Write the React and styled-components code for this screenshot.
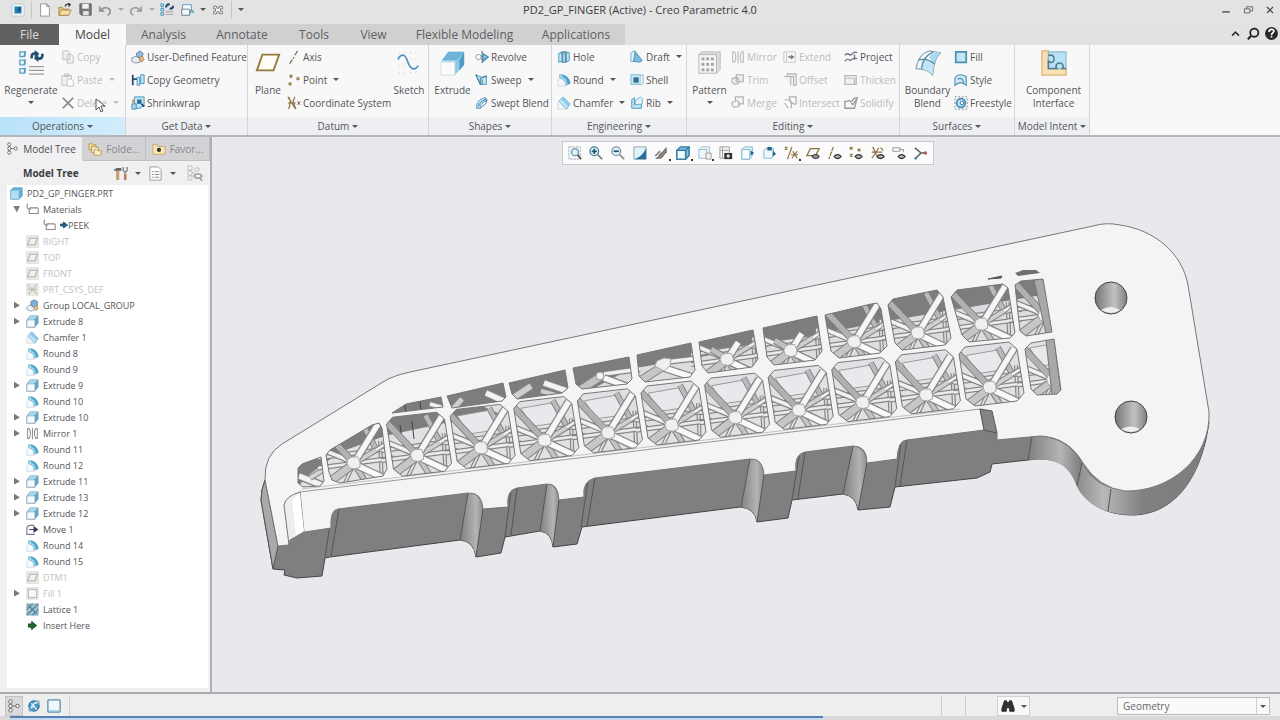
import React from 'react';
import styled, { createGlobalStyle } from 'styled-components';

const BLUE = '#3f8fb8';
const SKY = '#c3e6f6';
const TAN = '#a08a50';
const INK = '#4a4f55';

// Small icons, all on a 16x16 grid
const glyphs = {
  app: (
    <>
      <rect x="1" y="1" width="14" height="14" rx="2" fill="#f3f6f8" stroke="#b9c4cc" />
      <rect x="4" y="4" width="8" height="8" fill="#2a7cae" stroke="#8cc1de" />
      <rect x="8" y="5" width="3" height="5" fill="#175c8a" />
    </>
  ),
  newFile: <path d="M3 1h7l3 3v11H3zM10 1v3h3" fill="#fff" stroke="#8b8b8b" />,
  open: (
    <>
      <path d="M1 14V5h4l1 2h6v7z" fill="#e8c376" stroke="#a98747" />
      <path d="M1 14l3-6h11l-3 6z" fill="#f7dfa4" stroke="#a98747" />
      <path d="M8 4c1-3 3-3 6-2M12 0l2 2-2 2" stroke="#333" strokeWidth="1.4" />
    </>
  ),
  save: (
    <>
      <path d="M1 1h14v14H3l-2-2z" fill="#777" stroke="#5d5d5d" />
      <rect x="4" y="1" width="8" height="6" fill="#f1f1f1" />
      <rect x="5" y="10" width="7" height="5" fill="#e4e4e4" />
    </>
  ),
  undo: <path d="M2 4v5h5M3 9c2-5 11-5 11 1 0 2-1 3-3 4" stroke="#8e8e8e" strokeWidth="1.8" />,
  redo: <path d="M14 4v5H9M13 9C11 4 2 4 2 10c0 2 1 3 3 4" stroke="#9c9c9c" strokeWidth="1.8" />,
  regen: (
    <>
      <path d="M1 1h3v3H1zM1 6h3v3H1zM1 11h3v3H1z" fill={SKY} stroke={BLUE} />
      <path d="M7 5c0-3 2-4 4-3M15 3c0 3-2 4-4 3" stroke="#174a6e" strokeWidth="2.4" />
      <path d="M6 10h9M6 13h9" stroke="#999" />
    </>
  ),
  windows: (
    <>
      <path d="M3 2h10v7H3z" fill="#fff" stroke={BLUE} />
      <path d="M2 7h9v7H2z" fill="#eef7fb" stroke="#66747c" />
      <path d="M11 12l4-3M15 12V9h-3" stroke={BLUE} />
    </>
  ),
  closeWin: (
    <path d="M1 2h5v3h4V2h5v4h-3v4h3v4h-5v-3H6v3H1v-4h3V6H1z" fill="#f4f4f4" stroke="#777" strokeWidth="1.5" />
  ),
  minimize: <path d="M2 11h12" stroke="#555" strokeWidth="2.4" />,
  restore: <path d="M2 7h8v6H2zM5 7V4h9v6h-4" stroke="#666" strokeWidth="1.4" />,
  close: <path d="M2 2l12 12M14 2L2 14" stroke="#444" strokeWidth="2.4" />,
  chevronUp: <path d="M3 11l5-5 5 5" stroke="#333" strokeWidth="2.4" />,
  search: (
    <>
      <circle cx="9" cy="7" r="5" stroke="#222" strokeWidth="2.2" />
      <path d="M5 11l-4 4" stroke="#222" strokeWidth="2.6" />
    </>
  ),
  help: (
    <>
      <circle cx="8" cy="8" r="8" fill="#2b2b2b" />
      <path d="M5 6c0-4 6-4 6-1 0 2-3 2-3 5M8 11v2" stroke="#fff" strokeWidth="2" />
    </>
  ),
  copy: <path d="M2 1h6l2 2v8H2zM7 5h5l2 2v8H7z" fill="#f1f1f1" stroke="#bcbcbc" />,
  paste: (
    <>
      <path d="M1 3h11v11H1zM4 1h5v3H4z" fill="#f1f1f1" stroke="#bcbcbc" />
      <path d="M7 7h5l2 2v6H7z" fill="#fff" stroke="#bcbcbc" />
    </>
  ),
  remove: <path d="M2 2l12 12M14 2L2 14" stroke="#888" strokeWidth="2" />,
  udf: (
    <>
      <path d="M1 9l5-2 4 2v5l-5 1-4-2z" fill="#e9edf1" stroke="#7f8d99" />
      <path d="M6 4l4-3 4 3-2 5-5-1z" fill="#8fb9dd" stroke="#5d84a8" />
      <path d="M9 9l4-2 2 4-3 3z" fill="#e9b98b" stroke="#b98352" />
    </>
  ),
  copyGeom: (
    <>
      <path d="M2 2v12M2 7h5" stroke="#274d68" strokeWidth="2" />
      <path d="M7 5h3v9H7zM11 2h4v10h-4z" fill={SKY} stroke={BLUE} />
    </>
  ),
  shrinkwrap: (
    <>
      <path d="M4 1h11v11h-3l-1 2H4z" fill={SKY} stroke={BLUE} />
      <path d="M7 4h5v5H7z" fill="#2b6f97" />
      <path d="M12 9l3 3" stroke="#17445f" strokeWidth="1.8" />
      <path d="M1 9h5v6H1z" fill="#a9d3e8" stroke={BLUE} />
      <path d="M1 4h3v4H1z" fill="#d3a27a" />
    </>
  ),
  axis: <path d="M12 1L9 6M8 8l-1 2M6 11l-3 5" stroke="#7c7468" strokeWidth="1.5" />,
  point: (
    <path
      d="M3 2l3 3M6 2L3 5M11 5l3 3M14 5l-3 3M2 11l3 3M5 11l-3 3"
      stroke={TAN}
      strokeWidth="1.7"
    />
  ),
  csys: (
    <>
      <path d="M2 1l2 5-2 9M9 1L7 6l3 9M1 8h9M1 1l9 14" stroke="#8b7440" strokeWidth="1.4" />
      <path d="M12 6l3 4M15 6l-3 4" stroke={INK} />
    </>
  ),
  revolve: (
    <>
      <circle cx="4" cy="8" r="3" fill="#fff" stroke="#8b8b8b" />
      <path d="M9 4l6 4-6 5z" fill="#8cc4e0" stroke={BLUE} strokeWidth="1.5" />
      <path d="M8 1v14" stroke={INK} strokeDasharray="3 1" />
    </>
  ),
  sweep: (
    <>
      <path d="M1 2l7 3 5-2v10H6z" fill={SKY} stroke={BLUE} />
      <path d="M1 2l5 11V6l7-2M8 7v6" stroke="#3d6d88" />
    </>
  ),
  swept: (
    <>
      <path d="M2 14C1 8 5 3 12 2l2 3C9 7 6 9 6 14z" fill={SKY} stroke={BLUE} />
      <path d="M4 12c1-5 5-7 9-8M6 14l7-6V5" stroke="#3d6d88" />
    </>
  ),
  hole: (
    <>
      <path d="M2 4l4-2v11l-4 1zM10 2l4 1v9l-3 2z" fill={SKY} stroke={BLUE} />
      <ellipse cx="8" cy="4" rx="3" ry="2" fill="#7db7d4" stroke="#37718f" />
      <path d="M6 5v9h4V5" fill="#a4d2e8" stroke="#37718f" />
    </>
  ),
  round: (
    <>
      <path d="M1 7v8h9v-3" fill="#f4f7f9" stroke="#d0d7db" />
      <path d="M3 2c6-1 12 4 12 10l-5 2c0-4-2-7-7-8z" fill="#a5d6ed" stroke="#7fb9d6" />
      <path d="M6 2c5 1 9 5 9 10l-3 1c0-4-2-7-6-9z" fill="#4fa0c8" />
    </>
  ),
  chamfer: (
    <>
      <path d="M1 7v8h9v-3" fill="#f4f7f9" stroke="#d0d7db" />
      <path d="M2 6l5-5 8 8-4 6z" fill={SKY} stroke="#6fb0d0" />
      <path d="M7 1l8 8-2 3-8-8z" fill="#8cc9e6" />
    </>
  ),
  draft: (
    <>
      <path d="M1 3l5-2v12H1z" fill="#e2f2f9" stroke="#6aa9c8" />
      <path d="M6 2l8 10-3 2-7-1z" fill="#79bcdc" stroke={BLUE} />
    </>
  ),
  shell: (
    <>
      <path d="M1 2h11v11H1z" fill={SKY} stroke="#79b2cd" />
      <path d="M4 5h6v6H4z" fill="#336f8f" />
      <path d="M12 3l3-1v10l-3 2" fill="#e9f5fa" stroke="#8cb3c6" />
    </>
  ),
  rib: (
    <>
      <path d="M2 4l3-2v8l8-1v5H2z" fill={SKY} stroke={BLUE} />
      <path d="M6 5l6-4 2 2v6l-8 1z" fill="#e2f2f9" stroke="#6aa9c8" />
    </>
  ),
  mirror: <path d="M2 2h2c2 3 2 9 0 12H2zM14 2h-2c-2 3-2 9 0 12h2zM8 1v14" stroke="#bcbcbc" strokeWidth="1.3" />,
  mirrorDark: <path d="M2 2h2c2 3 2 9 0 12H2zM14 2h-2c-2 3-2 9 0 12h2zM8 1v14" stroke="#92959b" strokeWidth="1.3" />,
  trim: <path d="M6 2h8v8H6zM1 9c0-5 8-5 8 0s-8 5-8 0z" fill="#eee" stroke="#b0b0b0" strokeWidth="1.3" />,
  merge: <path d="M5 1h9v8H9v3c-5 2-8 0-8-4 1-2 2-2 4-2z M5 6c2-2 6 1 4 6" fill="#f3f3f3" stroke="#b0b0b0" strokeWidth="1.3" />,
  extend: (
    <>
      <path d="M1 2h3v12H1zM5 2h9v12H5" stroke="#c4c4c4" />
      <path d="M6 8h4" stroke="#777" strokeWidth="1.8" />
      <path d="M9 5l4 3-4 3z" fill="#777" />
    </>
  ),
  offset: <path d="M1 4h8v10M5 1h10v13h-3V4H5z" fill="#efefef" stroke="#b0b0b0" strokeWidth="1.2" />,
  intersect: <path d="M2 4c7 0 9 4 7 10M7 1h8v8c-4 1-7-3-8-8zM2 8l4 6" stroke="#b0b0b0" strokeWidth="1.4" />,
  project: <path d="M1 6c4-5 5 2 8-1s3-3 6-2M1 13c4-6 5 1 8-2s3-2 6-1M12 5v6" stroke="#666d80" strokeWidth="1.5" />,
  thicken: <path d="M1 3h13v10H1zM1 6h11v7" fill="#f2f2f2" stroke="#bbb" strokeWidth="1.4" />,
  solidify: <path d="M1 14V6c3 2 4-3 6 0 1 2 3-1 4-3l4-1-3 12z M8 8l2 2 4-6" stroke="#9a9a9a" strokeWidth="1.5" />,
  fill: <path d="M2 2h12v12H2z" fill={SKY} stroke="#4d90ad" strokeWidth="2" />,
  style: <path d="M1 14V6c3-6 9-4 13-2v10c-5-4-8-4-13 0zM4 7c4-2 7 0 7 4" fill="#cdeaf7" stroke="#4d90ad" strokeWidth="1.3" />,
  freestyle: (
    <>
      <rect x="1" y="1" width="14" height="14" stroke="#6c7a82" strokeDasharray="2 2" />
      <circle cx="8" cy="8" r="5" fill={SKY} stroke={BLUE} strokeWidth="2" />
      <circle cx="9" cy="8" r="2" fill="#fff" stroke="#31617a" />
    </>
  ),
  tree: (
    <>
      <path d="M4 3v10M5 8h6" stroke="#666" />
      <circle cx="4" cy="3" r="2" fill="#fff" stroke="#555" />
      <circle cx="4" cy="8" r="2" fill="#fff" stroke="#555" />
      <circle cx="4" cy="13" r="2" fill="#fff" stroke="#555" />
      <circle cx="12" cy="8" r="2" fill="#fff" stroke="#555" />
    </>
  ),
  folders: (
    <>
      <path d="M1 2h4l1 1h3v6H1z" fill="#f1d695" stroke="#b79955" />
      <path d="M4 5h4l1 1h3v6H4z" fill="#f6e2af" stroke="#b79955" />
      <path d="M7 9h3l1 1h4v5H7z" fill="#fdf0cc" stroke="#b79955" />
    </>
  ),
  favorites: (
    <>
      <path d="M1 3h5l1 2h8v9H1z" fill="#f8e6b6" stroke="#c2a562" />
      <circle cx="8" cy="9" r="2.4" fill="#333" />
    </>
  ),
  tools: (
    <>
      <path d="M5 5v10" stroke="#c9a06a" strokeWidth="3.4" />
      <path d="M1 4l3-2h5v3H1z" fill="#666" />
      <path d="M13 8v7" stroke="#b9805a" strokeWidth="2.8" />
      <path d="M11 1v4l2 2 2-2V1" stroke="#888" strokeWidth="1.6" />
    </>
  ),
  list: (
    <>
      <path d="M2 1h9l3 3v11H2z" fill="#fff" stroke="#999" />
      <path d="M4 6h2M7 6h5M4 9h2M7 9h5M4 12h2M7 12h5" stroke="#888" />
    </>
  ),
  filter: (
    <>
      <path d="M3 3v10M4 8h4" stroke="#bbb" />
      <path d="M1 1h4v4H1zM1 6h4v4H1zM1 11h4v4H1zM8 3h4v3H8z" fill="#f4f4f4" stroke="#c0c0c0" />
      <path d="M7 11c2-3 6-3 8 0-2 3-6 3-8 0zM13 13l2 3" stroke="#999" strokeWidth="1.5" />
    </>
  ),
  part: (
    <>
      <path d="M1 4l3-3h11v10l-4 4H1z" fill="#63b1da" stroke="#5b9fc4" />
      <path d="M1 4h10v11H1z" fill="#b5def3" stroke="#7fbbda" />
    </>
  ),
  material: (
    <path d="M2 1c-2 5 0 6 3 7M5 8V6h9l1 1v6H4V8z" stroke="#888" strokeWidth="1.3" />
  ),
  plane: (
    <>
      <rect width="16" height="16" fill="#e6e6e3" />
      <path d="M5 4h9l-3 8H2z" fill="#efefec" stroke="#b9b7b0" strokeWidth="1.5" />
    </>
  ),
  csysGray: (
    <>
      <rect width="16" height="16" fill="#e9e9e6" />
      <path d="M2 2l12 12M13 2L3 14M2 8h12" stroke="#bdbab0" strokeWidth="1.6" strokeDasharray="3 1" />
    </>
  ),
  group: (
    <>
      <path d="M1 10l5-3 5 2v4l-5 2-5-2z" fill="#f2f4f6" stroke="#8c97a0" />
      <path d="M6 3l4-2 4 2v6l-5 1-3-2z" fill="#7fb2d6" stroke="#5d84a8" />
      <path d="M9 11l4-3 2 4-3 2z" fill="#ecc48f" stroke="#b98352" />
    </>
  ),
  extrude: (
    <>
      <path d="M5 1h10v9l-4 5H1V6z" fill="#5ba7d0" stroke="#8fb4c8" />
      <path d="M5 1h10L8 7H1z" fill="#a9d6ec" />
      <path d="M1 6h10v9H1z" fill="#f8fbfc" stroke="#93adba" />
    </>
  ),
  move: (
    <>
      <path d="M10 3H5C2 3 1 5 1 8v6h10" stroke="#807a92" strokeWidth="1.4" />
      <path d="M4 8h9M10 5l4 3-4 3z" fill="#3b3555" stroke="#3b3555" strokeWidth="1.4" />
    </>
  ),
  fillGray: (
    <>
      <rect width="16" height="16" fill="#eae8e4" />
      <rect x="3" y="3" width="10" height="10" fill="#f8f8f6" stroke="#c0bcb4" strokeWidth="1.5" />
    </>
  ),
  lattice: (
    <>
      <rect x="1" y="1" width="14" height="14" fill="#9cc3d4" stroke="#6d8d9a" strokeDasharray="2 1" />
      <path d="M1 8l7-7M1 15L15 1M8 15l7-7M3 3l10 10" stroke="#48788c" strokeWidth="1.3" />
    </>
  ),
  insert: <path d="M3 6h4V3l6 5-6 5v-3H3z" fill="#1b6b2b" stroke="#0f4119" />,
  insertBlue: <path d="M1 6h6V2l8 6-8 6v-4H1z" fill="#245d86" stroke="#245d86" strokeWidth="2" />,
  zoomFit: (
    <>
      <path d="M1 1h13v14H1z" fill="#f4f8fa" stroke="#9aaab3" strokeDasharray="3 1" />
      <circle cx="8" cy="7" r="4" fill="#dceef6" stroke="#6b94a8" strokeWidth="1.5" />
      <path d="M11 10l4 5" stroke="#555" strokeWidth="2" />
    </>
  ),
  zoomIn: (
    <>
      <circle cx="6" cy="6" r="5" fill="#e0f1f8" stroke="#4c7f99" strokeWidth="1.5" />
      <path d="M10 10l5 5" stroke="#777" strokeWidth="2" />
      <path d="M3 6h6M6 3v6" stroke="#1f5674" strokeWidth="2" />
    </>
  ),
  zoomOut: (
    <>
      <circle cx="6" cy="6" r="5" fill="#e0f1f8" stroke="#7b95a2" strokeWidth="1.5" />
      <path d="M10 10l5 5" stroke="#888" strokeWidth="2" />
      <path d="M3 6h6" stroke="#1f5674" strokeWidth="2" />
    </>
  ),
  repaint: (
    <>
      <path d="M1 1h14v14H1z" fill="#dff1f9" stroke="#88a0ac" />
      <path d="M15 2v13H2C8 13 13 8 15 2z" fill="#276d98" />
    </>
  ),
  render: (
    <>
      <path d="M2 14c4 0 3-5 6-6s3-4 6-6v6c-3 0-3 6-7 6z" fill="#8a817b" stroke="#77706b" />
      <path d="M1 11c3 0 3-4 6-5" stroke="#77706b" strokeWidth="1.6" />
    </>
  ),
  display: (
    <>
      <path d="M1 5l4-4h10v10l-4 4H1z" fill="#7dbddd" stroke="#31789f" strokeWidth="1.6" />
      <path d="M1 5h10v10H1z" fill="#eef8fc" stroke="#31789f" strokeWidth="1.6" />
      <path d="M11 5l4-4" stroke="#31789f" strokeWidth="1.4" />
    </>
  ),
  saved: (
    <>
      <path d="M1 4h9v10H1zM1 4l3-3h9v8" fill="#eff7fb" stroke="#8cb7ca" />
      <path d="M9 8h6v7H9z" fill="#ececec" stroke="#999" />
    </>
  ),
  camera: (
    <>
      <path d="M1 1h11v13H1zM1 5h11M4 1v13" fill="#f5f5f5" stroke="#9a9a9a" />
      <path d="M6 8h9v7H6z" fill="#333" />
      <circle cx="10.5" cy="11.5" r="2" fill="#ddd" />
    </>
  ),
  section: (
    <>
      <path d="M1 4l3-3h9v10l-3 4H1z" fill="#dff2fa" stroke="#7bb5ce" />
      <path d="M1 4h9v11H1z" fill="#f7fcfe" stroke="#7bb5ce" />
      <path d="M11 5l4 3-4 3z" fill="#1c6491" />
    </>
  ),
  annotation: (
    <>
      <path d="M1 5l2-2h9v8l-2 3H1z" fill="#eff9fd" stroke="#7bb5ce" />
      <path d="M11 5l4 4-4 3zM5 1h5v4H5z" fill="#1c6491" />
    </>
  ),
  datumAll: (
    <path d="M1 1l3 3M4 1L1 4M9 1L4 15M10 6l5 8M15 6l-6 8M8 10h8" stroke="#8b7440" strokeWidth="1.4" />
  ),
  planeEye: (
    <>
      <path d="M5 3h10l-4 8H1z" stroke="#8b7440" strokeWidth="1.4" />
      <path d="M7 12c2-3 6-3 8 0-2 3-6 3-8 0z" fill="#999" stroke="#333" strokeWidth="1.3" />
    </>
  ),
  axisEye: (
    <>
      <path d="M6 1L1 15" stroke="#8b7440" strokeWidth="1.4" strokeDasharray="5 1" />
      <path d="M7 12c2-3 6-3 8 0-2 3-6 3-8 0z" fill="#bbb" stroke="#333" strokeWidth="1.5" />
    </>
  ),
  pointEye: (
    <>
      <path d="M1 1l3 3M4 1L1 4M10 3l3 3M13 3l-3 3M1 9l3 3M4 9l-3 3" stroke="#8b7440" strokeWidth="1.4" />
      <path d="M7 12c2-3 6-3 8 0-2 3-6 3-8 0z" fill="#bbb" stroke="#333" strokeWidth="1.5" />
    </>
  ),
  csysEye: (
    <>
      <path d="M2 1l6 13M9 2L1 14M1 7h12M11 2l3 3" stroke="#8b7440" strokeWidth="1.4" />
      <path d="M7 12c2-3 6-3 8 0-2 3-6 3-8 0z" fill="#bbb" stroke="#333" strokeWidth="1.5" />
    </>
  ),
  noteEye: (
    <>
      <path d="M1 2h8v4H1zM9 4h4v3" fill="#fff" stroke="#9a9a9a" strokeWidth="1.2" />
      <path d="M7 12c2-3 6-3 8 0-2 3-6 3-8 0z" fill="#bbb" stroke="#333" strokeWidth="1.5" />
    </>
  ),
  spin: (
    <>
      <path d="M1 2l7 6M8 8h5M8 8l-6 6" stroke="#5b5b5b" strokeWidth="1.8" />
      <circle cx="13" cy="8" r="2" fill="#b85f48" />
      <circle cx="2" cy="14" r="1.6" fill="#4c89aa" />
    </>
  ),
  globe: (
    <>
      <circle cx="8" cy="8" r="6" fill="#3e93c6" stroke="#2b6c96" />
      <path d="M5 11c1-5 4-7 7-7M5 5l6 7" stroke="#e9f5fb" strokeWidth="2" />
      <ellipse cx="8" cy="8" rx="8" ry="3" transform="rotate(-45 8 8)" stroke="#69a5c9" />
    </>
  ),
  screen: (
    <>
      <rect x="1" y="1" width="14" height="14" rx="1" fill="#eef7fc" stroke="#5f8fae" strokeWidth="1.5" />
      <path d="M2 14h12" stroke="#8fbfdb" strokeWidth="2" />
    </>
  ),
  binoculars: (
    <path d="M4 2h2l1 2h2l1-2h2l3 9v3h-5v-4H6v4H1v-3z" fill="#333" stroke="#222" />
  ),
};

// Ribbon icons, on a 28x28 grid
const bigGlyphs = {
  regenerate: (
    <>
      <path d="M2 2h5v5H2zM2 11h5v5H2zM2 20h5v5H2z" fill="#eaf6fb" stroke="#5ba0c2" strokeWidth="1.4" />
      <path d="M7 2l1-1v5l-1 1M7 11l1-1v5l-1 1M7 20l1-1v5l-1 1" stroke="#5ba0c2" />
      <path d="M15 9c-1-4 1-6 4-5M26 4c1 4-1 6-5 5" stroke="#1d4e6d" strokeWidth="2.8" />
      <path d="M18 0l5 4-5 4zM22 5l-5 4 5 4z" fill="#1d4e6d" />
      <path d="M12 18h16M12 22h16M12 26h16" stroke="#9b9b9b" strokeWidth="1.4" />
    </>
  ),
  plane: <path d="M8 5h18l-6 17H2z" fill="#fffdf5" stroke="#94793a" strokeWidth="2" />,
  sketch: (
    <>
      <path
        d="M3 3h1M9 3h1M15 3h1M21 3h1M3 10h1M15 10h1M21 10h1M3 17h1M9 17h1M3 24h1M9 24h1M15 24h1M21 24h1"
        stroke="#b5cfdd"
        strokeWidth="1.4"
      />
      <path d="M2 10C6 3 10 5 12 11s6 14 12 6" stroke="#4b94bd" strokeWidth="1.8" />
    </>
  ),
  extrude: (
    <>
      <path d="M1 13L9 2h17L16 13z" fill="#a9d9ef" />
      <path d="M9 2h17l-5 9H2z" fill="#6db3d8" />
      <path d="M16 13L26 2v14L16 27z" fill="#8dc8e5" />
      <path d="M26 2l-5 9v11l5-6z" fill="#4c9cc8" />
      <path d="M1 13h15v14H1z" fill="#f9fbfc" stroke="#d3dde2" />
    </>
  ),
  pattern: (
    <>
      <path d="M2 5l3-3h20v19l-4 4z" fill="#dcdcdc" stroke="#bcbcbc" />
      <rect x="2" y="5" width="19" height="20" fill="#f4f4f4" stroke="#b5b5b5" />
      <path
        d="M5 8h3v3H5zM10 8h3v3h-3zM15 8h3v3h-3zM5 14h3v3H5zM10 14h3v3h-3zM15 14h3v3h-3zM5 20h3v3H5zM10 20h3v3h-3zM15 20h3v3h-3z"
        fill="#a0a0a0"
      />
    </>
  ),
  boundary: (
    <>
      <path d="M1 20C3 10 8 3 15 1l13 2c-6 4-8 13-9 24-4-5-10-7-18-7z" fill="#f3f9fc" stroke="#8fa5b0" strokeWidth="1.2" />
      <path d="M9 10c4 0 8 1 12 4-1 4-2 8-2 13-4-4-8-6-12-7 0-4 0-7 2-10z" fill="#bfe5f6" />
      <path d="M15 8C17 4 22 2 28 3c-4 3-6 7-7 11z" fill="#a9d9ef" />
      <path d="M4 11c6-2 12 0 17 4M7 20c1-9 5-15 13-18" stroke="#5a8ba4" strokeWidth="1.4" />
    </>
  ),
  component: (
    <>
      <path d="M1 1h7v19h19v7H1z" fill="#f8dfb4" stroke="#d9b57a" strokeWidth="1.4" />
      <path d="M8 2h19v18H8z" fill="#b7e2f5" stroke="#8fb9c9" strokeWidth="1.2" />
      <path
        d="M8 6c4-2 7 1 6 5-1 3-4 3-6 1v8h9c-2-3 0-6 3-6s5 3 3 6h4"
        stroke="#54798a"
        strokeWidth="1.7"
      />
    </>
  ),
};

const Icon = ({ name, size = 14 }) => (
  <Svg width={size} height={size} viewBox="0 0 16 16" aria-hidden="true">
    {glyphs[name]}
  </Svg>
);

const BigIcon = ({ name }) => (
  <Svg width="26" height="26" viewBox="0 0 28 28" aria-hidden="true">
    {bigGlyphs[name]}
  </Svg>
);

const tabs = [
  ['File', 59],
  ['Model', 67],
  ['Analysis', 75],
  ['Annotate', 82],
  ['Tools', 62],
  ['View', 57],
  ['Flexible Modeling', 125],
  ['Applications', 98],
];

const groups = [
  {
    name: 'Operations',
    active: true,
    cols: '56px 66px',
    items: [
      { big: 'regenerate', lines: ['Regenerate'], arrow: true },
      [
        { icon: 'copy', text: 'Copy', off: true },
        { icon: 'paste', text: 'Paste', off: true, arrow: true },
        { icon: 'remove', text: 'Delete', off: true, arrow: true },
      ],
    ],
  },
  {
    name: 'Get Data',
    cols: '118px',
    items: [
      [
        { icon: 'udf', text: 'User-Defined Feature' },
        { icon: 'copyGeom', text: 'Copy Geometry' },
        { icon: 'shrinkwrap', text: 'Shrinkwrap' },
      ],
    ],
  },
  {
    name: 'Datum',
    cols: '34px 105px 38px',
    items: [
      { big: 'plane', lines: ['Plane'] },
      [
        { icon: 'axis', text: 'Axis' },
        { icon: 'point', text: 'Point', arrow: true },
        { icon: 'csys', text: 'Coordinate System' },
      ],
      { big: 'sketch', lines: ['Sketch'] },
    ],
  },
  {
    name: 'Shapes',
    cols: '41px 78px',
    items: [
      { big: 'extrude', lines: ['Extrude'] },
      [
        { icon: 'revolve', text: 'Revolve' },
        { icon: 'sweep', text: 'Sweep', arrow: true },
        { icon: 'swept', text: 'Swept Blend' },
      ],
    ],
  },
  {
    name: 'Engineering',
    cols: '73px 58px',
    items: [
      [
        { icon: 'hole', text: 'Hole' },
        { icon: 'round', text: 'Round', arrow: true },
        { icon: 'chamfer', text: 'Chamfer', arrow: true },
      ],
      [
        { icon: 'draft', text: 'Draft', arrow: true },
        { icon: 'shell', text: 'Shell' },
        { icon: 'rib', text: 'Rib', arrow: true },
      ],
    ],
  },
  {
    name: 'Editing',
    cols: '39px 52px 61px 57px',
    items: [
      { big: 'pattern', lines: ['Pattern'], arrow: true },
      [
        { icon: 'mirror', text: 'Mirror', off: true },
        { icon: 'trim', text: 'Trim', off: true },
        { icon: 'merge', text: 'Merge', off: true },
      ],
      [
        { icon: 'extend', text: 'Extend', off: true },
        { icon: 'offset', text: 'Offset', off: true },
        { icon: 'intersect', text: 'Intersect', off: true },
      ],
      [
        { icon: 'project', text: 'Project' },
        { icon: 'thicken', text: 'Thicken', off: true },
        { icon: 'solidify', text: 'Solidify', off: true },
      ],
    ],
  },
  {
    name: 'Surfaces',
    cols: '49px 62px',
    items: [
      { big: 'boundary', lines: ['Boundary', 'Blend'] },
      [
        { icon: 'fill', text: 'Fill' },
        { icon: 'style', text: 'Style' },
        { icon: 'freestyle', text: 'Freestyle' },
      ],
    ],
  },
  {
    name: 'Model Intent',
    cols: '71px',
    items: [{ big: 'component', lines: ['Component', 'Interface'] }],
  },
];

const tree = [
  { icon: 'part', text: 'PD2_GP_FINGER.PRT', level: 0 },
  { icon: 'material', text: 'Materials', fold: 'open' },
  { icon: 'material', text: 'PEEK', level: 2, arrow: true },
  { icon: 'plane', text: 'RIGHT', off: true },
  { icon: 'plane', text: 'TOP', off: true },
  { icon: 'plane', text: 'FRONT', off: true },
  { icon: 'csysGray', text: 'PRT_CSYS_DEF', off: true },
  { icon: 'group', text: 'Group LOCAL_GROUP', fold: 'shut' },
  { icon: 'extrude', text: 'Extrude 8', fold: 'shut' },
  { icon: 'chamfer', text: 'Chamfer 1' },
  { icon: 'round', text: 'Round 8' },
  { icon: 'round', text: 'Round 9' },
  { icon: 'extrude', text: 'Extrude 9', fold: 'shut' },
  { icon: 'round', text: 'Round 10' },
  { icon: 'extrude', text: 'Extrude 10', fold: 'shut' },
  { icon: 'mirrorDark', text: 'Mirror 1', fold: 'shut' },
  { icon: 'round', text: 'Round 11' },
  { icon: 'round', text: 'Round 12' },
  { icon: 'extrude', text: 'Extrude 11', fold: 'shut' },
  { icon: 'extrude', text: 'Extrude 13', fold: 'shut' },
  { icon: 'extrude', text: 'Extrude 12', fold: 'shut' },
  { icon: 'move', text: 'Move 1' },
  { icon: 'round', text: 'Round 14' },
  { icon: 'round', text: 'Round 15' },
  { icon: 'plane', text: 'DTM1', off: true },
  { icon: 'fillGray', text: 'Fill 1', off: true, fold: 'shut' },
  { icon: 'lattice', text: 'Lattice 1' },
  { icon: 'insert', text: 'Insert Here' },
];

const viewTools = [
  ['zoomFit', 'Refit'],
  ['zoomIn', 'Zoom in'],
  ['zoomOut', 'Zoom out'],
  ['repaint', 'Repaint'],
  ['render', 'Rendering options', true],
  ['display', 'Display style', true],
  ['saved', 'Saved orientations', true],
  ['camera', 'View manager'],
  ['section', 'Section'],
  ['annotation', 'Annotation planes'],
  ['datumAll', 'Datum display filters', true],
  ['planeEye', 'Plane display'],
  ['axisEye', 'Axis display'],
  ['pointEye', 'Point display'],
  ['csysEye', 'Csys display'],
  ['noteEye', 'Annotation display'],
  ['spin', 'Spin center'],
];

// ---- Part model ----

const range = (from, to) => Array.from({ length: to - from }, (_, i) => from + i);
const lowerNode = (k) => [354 + 63.6 * k, 463 - 7.3 * k];
const upperNode = (k) => [600 + 63.6 * k, 377 - 8.8 * k];

const lowerCells = [
  '298,468 302,464 321,457 324,481 320,486 303,487 298,483',
  '326,455 330,450 372,425 379,423 382,428 387,469 383,476 340,483 332,480 329,472',
  ...range(1, 11).map((k) => {
    const [x, y] = [354 + 63.6 * k, 463 - 7.8 * k];
    return [
      [-31, -31], [-25, -38], [19, -43], [27, -36], [34, 8], [27, 16], [-15, 21], [-24, 14],
    ]
      .map(([dx, dy]) => `${x + dx},${y + dy}`)
      .join(' ');
  }),
  '1025,349 1031,343 1054,339 1061,390 1057,394 1037,395 1031,389',
];

const upperCells = [
  '392,413 406,404 441,397 443,407',
  '447,396 503,383 506,397 502,401 452,408',
  '509,383 565,370 568,388 562,393 517,399 512,394',
  '573,368 629,357 632,379 627,384 582,389 576,384',
  '637,355 691,343 695,370 690,377 645,382 639,376',
  '699,342 753,330 758,359 752,367 708,373 702,366',
  '763,328 817,316 822,351 815,360 774,365 767,357',
  '825,315 871,304 877,303 881,309 887,346 880,353 839,358 831,351',
  '888,305 893,299 937,290 943,297 951,338 945,345 902,350 895,343',
  '951,297 957,290 1003,284 1008,288 1015,333 1010,338 969,342 962,335',
  '1015,285 1021,281 1043,279 1052,332 1026,336 1020,331',
];

const Rod = ({ d, w = 7, c = '#f3f3f3' }) => (
  <>
    <path d={d} stroke="#808080" strokeWidth={w + 1} />
    <path d={d} stroke="#c4c4c4" strokeWidth={w - 1} />
    <path d={d} stroke={c} strokeWidth={w - 2} />
  </>
);

// One lattice node with its struts; `short` drops the struts that a cut cell has lost
const Node = ({ x, y, hatch, short }) => (
  <g transform={`translate(${x} ${y})`}>
    {hatch && <path d="M-24-32L10-38L16-18L-12-14z" fill="#e8e9ed" stroke="#9a9a9a" strokeWidth="1" />}
    <Rod d="M26-22L28 20" w={3} c="#e2e2e2" />
    <Rod d="M-36 5L40-5" w={4} c="#eeeeee" />
    <Rod d="M-36-5L40-15" w={4} c="#e6e6e6" />
    {!short && <Rod d="M22-14L8-40" w={5} c="#b9b9b9" />}
    <Rod d="M-33-14L-6-3" w={5} />
    <Rod d="M4-2L22-13" w={5} c="#cfcfcf" />
    <Rod d="M22-13L33-20" w={4} />
    <Rod d="M2 4L13 21" w={5} c="#c4c4c4" />
    {!short && <Rod d="M-32-34L-2-2" w={6} c="#b0b0b0" />}
    {short && <Rod d="M-16-10L-2-2" w={6} c="#c0c0c0" />}
    <Rod d="M-1 3L-10 22" w={3} c="#eeeeee" />
    <Rod d="M-2 2L-26 20" w={8} c="#c6c6c6" />
    <Rod d="M2 2L34 17" w={7} c="#fafafa" />
    {!short && <Rod d="M2-3L24-39" w={7} c="#f6f6f6" />}
    {short && <Rod d="M2-3L11-17" w={7} c="#f6f6f6" />}
    <path d="M-6-4L-2-6L4-6L6-1L6 4L1 6L-5 5L-7 0z" fill="#f0f0f0" stroke="#a8a8a8" strokeWidth="1" />
  </g>
);

const PartModel = () => (
  <ModelSvg viewBox="212 137 1068 555" role="img" aria-label="PD2_GP_FINGER part">
    <defs>
      <clipPath id="lower">
        {lowerCells.map((p) => <polygon key={p} points={p} />)}
      </clipPath>
      <clipPath id="upper">
        {upperCells.map((p) => <polygon key={p} points={p} />)}
      </clipPath>
      <linearGradient id="fillet">
        <stop offset="0" stopColor="#7f7f7f" />
        <stop offset="0.7" stopColor="#b4b4b4" />
        <stop offset="1" stopColor="#8d8d8d" />
      </linearGradient>
      <linearGradient id="bore">
        <stop offset="0" stopColor="#757575" />
        <stop offset="0.6" stopColor="#c2c2c2" />
        <stop offset="1" stopColor="#808080" />
      </linearGradient>
      <linearGradient id="neck">
        <stop offset="0" stopColor="#808080" />
        <stop offset="0.6" stopColor="#b5b5b5" />
        <stop offset="1" stopColor="#7a7a7a" />
      </linearGradient>
      <linearGradient id="lobe">
        <stop offset="0" stopColor="#8a8a8a" />
        <stop offset="0.2" stopColor="#b9b9b9" />
        <stop offset="0.5" stopColor="#808080" />
        <stop offset="1" stopColor="#7d7d7d" />
      </linearGradient>
    </defs>

    {/* side walls */}
    <path
      d="M265 480L262 490L261 500L273 569L285 570L284 575L297 578L322 576L325 558L330 557L460 540Q474 541 476 557L501 553L505 537L540 531Q552 533 553 547L577 544L582 527L740 507Q755 508 757 522L788 518L792 500L843 494Q856 496 858 510L890 507L895 487L977 478L990 472L992 464L1037 459C1060 458 1069 468 1075 480C1082 500 1102 515 1132 515C1168 515 1200 487 1209 422L1150 380L700 400Z"
      fill="#7f7f7f"
      stroke="#444"
      strokeWidth="1"
    />
    <path d="M265 480L262 490L261 500L273 569L278 546z" fill="#a9a9a9" stroke="#555" strokeWidth="1" />
    <path d="M468 492Q481 494 483 509L476 557Q474 541 460 540z" fill="url(#fillet)" />
    <path d="M547 483Q558 487 559 500L553 547Q552 533 540 531z" fill="url(#fillet)" />
    <path d="M750 458Q764 461 764 475L757 522Q755 508 740 507z" fill="url(#fillet)" />
    <path d="M853 446Q866 449 867 463L858 510Q856 496 843 494z" fill="url(#fillet)" />
    <path d="M1032 436Q1067 436 1082 463L1077 486C1069 466 1059 457 1028 460z" fill="url(#neck)" />
    <path d="M1082 463Q1095 490 1130 491C1172 492 1203 470 1208 425C1200 487 1168 515 1132 515C1102 515 1082 500 1077 486z" fill="url(#lobe)" />
    <path
      d="M339 509L331 556M332 512L325 557M468 493L460 540M483 509L476 557M517 488L511 535M511 491L505 537M547 484L540 531M559 500L553 547M595 478L587 526M588 481L581 527M750 459L741 507M764 475L757 522M805 452L798 499M799 456L792 500M853 446L843 494M867 463L858 510M907 440L900 486M901 443L895 487M1032 437L1028 460M1082 463L1077 486M1111 489L1108 511"
      stroke="#555"
      strokeWidth="1"
      fill="none"
    />

    {/* front face */}
    <path
      d="M278 546L265 480Q264 455 282 444L383 382Q392 376 410 372L1093 226Q1106 222 1120 225C1155 230 1182 253 1188 285L1209 412C1211 458 1170 492 1125 491Q1099 488 1083 463Q1068 437 1040 436L997 440L997 433L984 430L907 440Q898 440 897 459L867 463Q867 446 853 446L805 452Q794 454 796 471L764 475Q763 458 750 459L595 478Q582 481 584 497L559 500Q558 483 547 484L517 488Q506 490 508 507L483 509Q482 492 468 493L338 509Q330 510 331 528L305 532L290 540L289 545Z"
      fill="#f4f4f4"
      stroke="#777"
      strokeWidth="1"
    />
    <path d="M289 545L284 505Q286 496 300 492L304 532L290 540z" fill="#ededed" stroke="#777" strokeWidth="1" />
    <path d="M292 500L300 493L304 531L296 535z" fill="#fff" />
    <path d="M300 492L980 409L984 430" fill="none" stroke="#999" strokeWidth="1" />
    <path d="M302 489L960 409" fill="none" stroke="#c4c4c4" strokeWidth="1" />
    <path d="M980 409L992 411L997 433L984 430z" fill="#858585" stroke="#555" strokeWidth="1" />

    {/* lattice window, upper row */}
    <g clipPath="url(#upper)" fill="none">
      <path d="M380 260H1060V420H380z" fill="#dcdde0" />
      <path d="M380 260H1060V292L882 322L700 357L630 369L568 402L380 430z" fill="#7d7d7d" />
      <path d="M420 400l1 12M405 405l1 10" stroke="#444" />
      <Rod d="M430 404L444 408" w={5} />
      <Rod d="M452 410L462 399" w={6} c="#cfcfcf" />
      <Rod d="M486 393L506 402" w={7} />
      <Rod d="M513 398L531 386" w={7} c="#cfcfcf" />
      <Rod d="M544 383L570 392" w={7} />
      <Rod d="M541 391L560 396" w={5} c="#cfcfcf" />
      <Rod d="M604 374L640 369" w={5} />
      <Rod d="M600 377L580 390" w={8} c="#c2c2c2" />
      <Rod d="M604 378L634 389" w={7} c="#fafafa" />
      <circle cx="600" cy="376" r="4" fill="#f1f1f1" stroke="#999" />
      <Rod d="M666 362L700 358" w={5} />
      <Rod d="M662 367L640 381" w={8} c="#c6c6c6" />
      <Rod d="M664 368L698 379" w={7} c="#fafafa" />
      <path d="M655 366L657 361L664 358L671 359L670 366L664 371z" fill="#f0f0f0" stroke="#a8a8a8" strokeWidth="1" />
      {range(2, 8).map((k) => {
        const [x, y] = upperNode(k);
        return <Node key={k} x={x} y={y} short={k < 4} />;
      })}
      <path d="M1043 279L1034 280L1046 334L1053 333z" fill="#a8a8a8" stroke="#777" />
    </g>

    {/* lattice window, lower row */}
    <g clipPath="url(#lower)" fill="none">
      <path d="M290 330H1070V495H290z" fill="#e0e1e4" />
      <path d="M290 490V440L380 400L480 405L500 414L440 424L385 436L340 452L310 474L298 486z" fill="#7d7d7d" />
      <path d="M400 425l3 20M412 421l2 18" stroke="#444" />
      <Rod d="M299 476L324 486" w={7} />
      <Rod d="M310 478L326 468" w={5} c="#d6d6d6" />
      {range(0, 12).map((k) => {
        const [x, y] = lowerNode(k);
        return <Node key={k} x={x} y={y - k / 4} hatch={k > 1} />;
      })}
      <path d="M1054 338L1046 340L1052 395L1061 393z" fill="#a8a8a8" stroke="#777" />
    </g>
    <g fill="none" stroke="#777" strokeWidth="1">
      {[...upperCells, ...lowerCells].map((p) => <polygon key={p} points={p} />)}
    </g>
    <path d="M1015 273L1023 270L1036 270L1040 273L1018 276z" fill="#6f6f6f" />
    <path d="M988 279L1002 276L1001 278z" fill="#555" stroke="#555" />

    {/* through holes */}
    <g stroke="#444" strokeWidth="1">
      <circle cx="1111" cy="298" r="16" fill="url(#bore)" />
      <circle cx="1131" cy="417" r="16" fill="url(#bore)" />
    </g>
    <path d="M1101 310Q1111 304 1120 310Q1111 316 1101 310z" fill="#eeeff2" />
    <path d="M1121 429Q1131 424 1140 429Q1131 435 1121 429z" fill="#eeeff2" />
  </ModelSvg>
);

const Command = ({ item }) => (
  <CommandButton type="button" $off={item.off}>
    <Icon name={item.icon} />
    <span>{item.text}</span>
    {item.arrow && <Caret $gap={4} />}
  </CommandButton>
);

const RibbonGroup = ({ group }) => (
  <GroupBox>
    <GroupBody $cols={group.cols}>
      {group.items.map((item) =>
        Array.isArray(item) ? (
          <CommandColumn key={item[0].text}>
            {item.map((entry) => (
              <Command key={entry.text} item={entry} />
            ))}
          </CommandColumn>
        ) : (
          <BigButton type="button" key={item.big}>
            <BigIcon name={item.big} />
            <BigLabel>
              {item.lines.map((line) => (
                <span key={line}>{line}</span>
              ))}
            </BigLabel>
            {item.arrow && <Caret />}
          </BigButton>
        )
      )}
    </GroupBody>
    <GroupFooter type="button" $active={group.active}>
      {group.name}
      <Caret $gap={3} />
    </GroupFooter>
  </GroupBox>
);

const App = () => (
  <Window>
    <GlobalStyle />
    <TitleBar>
      <QuickAccess>
        <IconButton type="button" aria-label="Window menu"><Icon name="app" /></IconButton>
        <Separator />
        <IconButton type="button" aria-label="New"><Icon name="newFile" /></IconButton>
        <IconButton type="button" aria-label="Open"><Icon name="open" /></IconButton>
        <IconButton type="button" aria-label="Save"><Icon name="save" size={13} /></IconButton>
        <IconButton type="button" aria-label="Undo"><Icon name="undo" /></IconButton>
        <SmallCaretButton type="button" aria-label="Undo list"><Caret $pale /></SmallCaretButton>
        <IconButton type="button" aria-label="Redo"><Icon name="redo" /></IconButton>
        <SmallCaretButton type="button" aria-label="Redo list"><Caret $pale /></SmallCaretButton>
        <IconButton type="button" aria-label="Regenerate model"><Icon name="regen" /></IconButton>
        <IconButton type="button" aria-label="Windows"><Icon name="windows" /></IconButton>
        <SmallCaretButton type="button" aria-label="Window list"><Caret /></SmallCaretButton>
        <IconButton type="button" aria-label="Close window"><Icon name="closeWin" size={10} /></IconButton>
        <Separator />
        <SmallCaretButton type="button" aria-label="Customize toolbar"><Caret /></SmallCaretButton>
      </QuickAccess>
      <Title>PD2_GP_FINGER (Active) - Creo Parametric 4.0</Title>
      <WindowButtons>
        <IconButton type="button" aria-label="Minimize"><Icon name="minimize" size={10} /></IconButton>
        <IconButton type="button" aria-label="Restore"><Icon name="restore" size={11} /></IconButton>
        <IconButton type="button" aria-label="Close"><Icon name="close" size={8} /></IconButton>
      </WindowButtons>
    </TitleBar>

    <TabStrip>
      {tabs.map(([name, width]) => (
        <Tab key={name} type="button" $width={width} $kind={name}>{name}</Tab>
      ))}
      <TabTools>
        <ToolButton type="button" aria-label="Minimize ribbon"><Icon name="chevronUp" size={11} /></ToolButton>
        <ToolButton type="button" aria-label="Search"><Icon name="search" size={13} /></ToolButton>
        <ToolButton type="button" aria-label="Help"><Icon name="help" size={13} /></ToolButton>
      </TabTools>
    </TabStrip>

    <Ribbon>
      {groups.map((group) => (
        <RibbonGroup key={group.name} group={group} />
      ))}
      <Pointer width="10" height="16" viewBox="0 0 10 16" aria-hidden="true">
        <path d="M1 1v11l3-3 2 5 2-1-2-5h4z" fill="#fff" stroke="#555" />
      </Pointer>
    </Ribbon>

    <Workspace>
      <Sidebar>
        <SideTabs>
          <SideTab type="button" $active $width={83}><Icon name="tree" size={13} />Model Tree</SideTab>
          <SideTab type="button" $width={63}><Icon name="folders" />Folde...</SideTab>
          <SideTab type="button" $width={64}><Icon name="favorites" />Favor...</SideTab>
        </SideTabs>
        <TreeHeader>
          <TreeTitle>Model Tree</TreeTitle>
          <IconButton type="button" aria-label="Settings"><Icon name="tools" size={15} /></IconButton>
          <SmallCaretButton type="button" aria-label="Settings menu"><Caret /></SmallCaretButton>
          <IconButton type="button" aria-label="Show"><Icon name="list" size={15} /></IconButton>
          <SmallCaretButton type="button" aria-label="Show menu"><Caret /></SmallCaretButton>
          <FilterButton type="button" aria-label="Tree filter"><Icon name="filter" size={16} /></FilterButton>
        </TreeHeader>
        <TreeList>
          {tree.map(({ icon, text, level = 1, fold, off, arrow }) => (
            <TreeRow key={text} $level={level} $off={off}>
              {level === 1 && <Fold $state={fold} />}
              <Icon name={icon} size={13} />
              {arrow && <TreeArrow><Icon name="insertBlue" size={8} /></TreeArrow>}
              <span>{text}</span>
            </TreeRow>
          ))}
        </TreeList>
      </Sidebar>
      <Viewport>
        <PartModel />
        <ViewToolbar>
          {viewTools.map(([name, label, menu]) => (
            <ViewButton key={name} type="button" aria-label={label} $menu={menu}>
              <Icon name={name} />
            </ViewButton>
          ))}
        </ViewToolbar>
      </Viewport>
    </Workspace>

    <StatusBar>
      <StatusIcons>
        <StatusButton type="button" aria-label="Toggle tree" $pressed><Icon name="tree" /></StatusButton>
        <StatusButton type="button" aria-label="Toggle browser"><Icon name="globe" /></StatusButton>
        <StatusButton type="button" aria-label="Full screen"><Icon name="screen" /></StatusButton>
      </StatusIcons>
      <StatusFields>
        <StatusCell />
        <StatusCell />
        <FindBox>
          <IconButton type="button" aria-label="Find"><Icon name="binoculars" /></IconButton>
          <SmallCaretButton type="button" aria-label="Find menu"><Caret /></SmallCaretButton>
        </FindBox>
        <SelectBox>
          <FilterSelect aria-label="Selection filter" defaultValue="Geometry">
            <option>Geometry</option>
          </FilterSelect>
          <SelectArrow><Caret /></SelectArrow>
        </SelectBox>
      </StatusFields>
    </StatusBar>
    <ProgressTrack><ProgressBar /></ProgressTrack>
  </Window>
);

// Styled Components

const GlobalStyle = createGlobalStyle`
  * {
    box-sizing: border-box;
  }

  body {
    margin: 0;
    font-family: "Open Sans", "Noto Sans", sans-serif;
    font-size: 10px;
    color: #555558;
  }

  button {
    border: 0;
    padding: 0;
    background: none;
    font: inherit;
    color: inherit;
    white-space: nowrap;
  }
`;

const Svg = styled.svg`
  display: block;
  flex: none;
  fill: none;
`;

const Window = styled.div`
  display: flex;
  flex-direction: column;
  min-height: 100vh;
  background: #ececee;
`;

const TitleBar = styled.header`
  display: grid;
  grid-template-columns: 1fr auto 1fr;
  align-items: center;
  height: 24px;
  padding-bottom: 5px;
  background: #e3e3e3;
`;

const QuickAccess = styled.div`
  display: flex;
  align-items: center;
  padding-left: 8px;
`;

const IconButton = styled.button`
  display: flex;
  align-items: center;
  justify-content: center;
  width: 20px;
  height: 18px;
`;

const ToolButton = styled(IconButton)`
  width: 18px;
`;

const FilterButton = styled(IconButton)`
  margin-left: 5px;
`;

const SmallCaretButton = styled.button`
  display: flex;
  align-items: center;
  justify-content: center;
  width: 11px;
  height: 18px;
`;

const Separator = styled.span`
  width: 1px;
  height: 18px;
  margin: 0 3px;
  background: #c4c4c4;
`;

const Caret = styled.span`
  flex: none;
  width: 0;
  height: 0;
  margin-left: ${({ $gap = 0 }) => $gap}px;
  border: 3px solid transparent;
  border-top-color: ${({ $pale }) => ($pale ? '#aaa' : 'currentColor')};
  border-bottom: 0;
`;

const Title = styled.h1`
  margin: 0;
  font-size: 11px;
  font-weight: 400;
  line-height: 16px;
  color: #3c3c3e;
`;

const WindowButtons = styled.div`
  display: flex;
  justify-content: flex-end;
  gap: 2px;
`;

const TabStrip = styled.nav`
  display: flex;
  height: 21px;
  background: #e2e2e2;
`;

const tabColors = {
  File: ['#606062', '#dcdcdc'],
  Model: ['#f8f8f9', '#444446'],
};

const Tab = styled.button`
  flex: 0 0 ${({ $width }) => $width}px;
  font-size: 12px;
  line-height: 20px;
  background: ${({ $kind }) => (tabColors[$kind] || ['#d0d0d1'])[0]};
  color: ${({ $kind }) => (tabColors[$kind] || [null, '#5e5e62'])[1]};
`;

const TabTools = styled.div`
  display: flex;
  margin-left: auto;
`;

const Ribbon = styled.section`
  position: relative;
  display: flex;
  background: #f8f8f9;
  border-bottom: 2px solid #b4b6ba;
`;

const GroupBox = styled.div`
  display: flex;
  flex-direction: column;
  border-right: 1px solid #d5d6d9;
`;

const GroupBody = styled.div`
  display: grid;
  grid-template-columns: ${({ $cols }) => $cols};
  height: 72px;
  padding-left: 3px;
`;

const GroupFooter = styled.button`
  display: flex;
  align-items: center;
  justify-content: center;
  height: 18px;
  background: ${({ $active }) => ($active ? 'linear-gradient(90deg, #b9e2f9, #d3edfb)' : '#eeeff3')};
`;

const CommandColumn = styled.div`
  display: flex;
  flex-direction: column;
`;

const CommandButton = styled.button`
  display: flex;
  align-items: center;
  gap: 2px;
  height: 23px;
  padding-left: 2px;
  color: ${({ $off }) => ($off ? '#bcbcbe' : 'inherit')};
`;

const BigButton = styled.button`
  display: flex;
  flex-direction: column;
  align-items: center;
  padding-top: 5px;
`;

const BigLabel = styled.span`
  display: flex;
  flex-direction: column;
  align-items: center;
  margin: 8px 0 4px;
  line-height: 13px;
`;

const Pointer = styled.svg`
  position: absolute;
  left: 95px;
  top: 53px;
`;

const Workspace = styled.main`
  display: flex;
  flex: 1;
`;

const Sidebar = styled.aside`
  display: flex;
  flex-direction: column;
  flex: 0 0 212px;
  padding-bottom: 4px;
  background: #f0f0f2;
  border-right: 2px solid #b0b1b5;
`;

const SideTabs = styled.div`
  display: flex;
  height: 24px;
`;

const SideTab = styled.button`
  display: flex;
  align-items: center;
  justify-content: center;
  gap: 4px;
  flex: 0 0 ${({ $width }) => $width}px;
  background: ${({ $active }) => ($active ? 'transparent' : '#d3d3d6')};
  border-right: 1px solid ${({ $active }) => ($active ? '#d3d3d6' : '#c0c0c3')};
  border-bottom: 1px solid ${({ $active }) => ($active ? 'transparent' : '#c0c0c3')};
  color: ${({ $active }) => ($active ? '#4c4c4e' : '#868689')};
`;

const TreeHeader = styled.div`
  display: flex;
  align-items: center;
  gap: 2px;
  height: 24px;
  padding: 0 5px 0 23px;
`;

const TreeTitle = styled.h2`
  flex: 1;
  margin: 0;
  font-size: 10px;
  font-weight: 700;
  color: #3c3c3e;
`;

const TreeList = styled.ul`
  flex: 1;
  margin: 0 2px 0 7px;
  padding: 0;
  list-style: none;
  background: #fff;
`;

const treeIndent = [3, 6, 36];

const TreeRow = styled.li`
  display: flex;
  align-items: center;
  gap: 4px;
  height: 16px;
  padding-left: ${({ $level }) => treeIndent[$level]}px;
  font-size: 9px;
  color: ${({ $off }) => ($off ? '#c2c2c2' : '#555558')};
`;

const TreeArrow = styled.span`
  margin-right: -4px;
`;

const Fold = styled.span`
  flex: none;
  width: 9px;
  height: 7px;
  background: ${({ $state }) => ($state ? '#7b7b7d' : 'transparent')};
  clip-path: ${({ $state }) =>
    $state === 'open' ? 'polygon(0 0, 7px 0, 4px 7px)' : 'polygon(1px 0, 7px 4px, 1px 7px)'};
`;

const Viewport = styled.section`
  position: relative;
  flex: 1;
  background: #e8e9ed;
`;

const ModelSvg = styled.svg`
  display: block;
  width: 100%;
  height: 100%;
`;

const ViewToolbar = styled.div`
  position: absolute;
  top: 4px;
  left: 350px;
  display: flex;
  align-items: center;
  width: 372px;
  height: 24px;
  padding: 0 1px;
  background: #fbfbfc;
  border: 1px solid #c6c8cc;
`;

const ViewButton = styled.button`
  position: relative;
  display: flex;
  flex: 1;
  align-items: center;
  justify-content: center;
  height: 22px;

  &::after {
    content: "";
    position: absolute;
    right: 1px;
    bottom: 3px;
    width: 2px;
    height: 2px;
    background: ${({ $menu }) => ($menu ? '#333' : 'transparent')};
  }
`;

const StatusBar = styled.footer`
  display: flex;
  justify-content: space-between;
  height: 24px;
  padding-top: 2px;
  background: #eeeeef;
  border-top: 2px solid #a9aaad;
`;

const StatusIcons = styled.div`
  display: flex;
  gap: 2px;
  padding: 0 6px 0 5px;
  border-right: 1px solid #d0d0d2;
`;

const StatusButton = styled.button`
  display: flex;
  align-items: center;
  justify-content: center;
  width: 18px;
  height: 20px;
  background: ${({ $pressed }) => ($pressed ? '#dadadc' : 'transparent')};
  border: 1px solid ${({ $pressed }) => ($pressed ? '#c2c2c4' : 'transparent')};
`;

const StatusFields = styled.div`
  display: flex;
  align-items: center;
  padding-right: 10px;
`;

const StatusCell = styled.span`
  width: 24px;
  height: 20px;
  border-left: 1px solid #cbcbce;
`;

const FindBox = styled.div`
  display: flex;
  align-items: center;
  height: 20px;
  margin: 0 87px 0 8px;
  background: #f8f8f9;
  border: 1px solid #d0d0d3;
`;

const SelectBox = styled.div`
  display: flex;
  height: 18px;
  background: #fafafa;
  border: 1px solid #bcbcc0;
`;

const FilterSelect = styled.select`
  appearance: none;
  width: 139px;
  padding: 0 5px;
  border: 0;
  border-right: 1px solid #d0d0d3;
  background: transparent;
  font: inherit;
  color: #66666a;
`;

const SelectArrow = styled.span`
  display: flex;
  align-items: center;
  justify-content: center;
  width: 12px;
`;

const ProgressTrack = styled.div`
  height: 4px;
  padding-left: 10px;
  background: #d9d9db;
`;

const ProgressBar = styled.div`
  width: 64%;
  height: 4px;
  background: #c8d6f0;
  border-top: 2px solid #5580b4;
`;

export default App;
